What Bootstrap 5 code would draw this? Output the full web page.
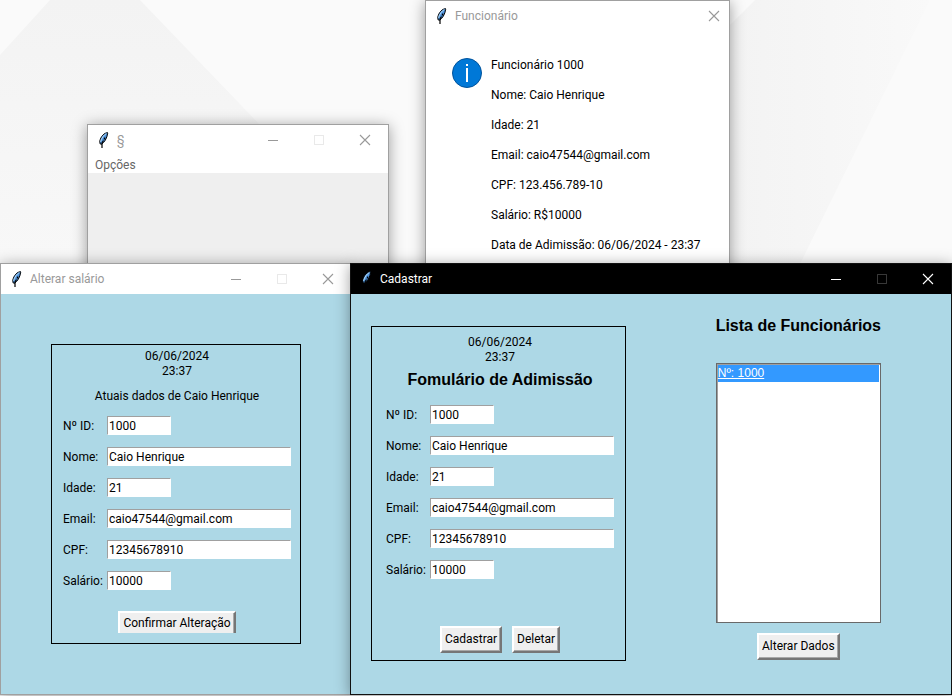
<!DOCTYPE html>
<html lang="pt-BR">
<head>
<meta charset="utf-8">
<meta name="viewport" content="width=device-width, initial-scale=1">
<title>Cadastro de Funcionários</title>
<link href="https://cdn.jsdelivr.net/npm/bootstrap@5.3.0/dist/css/bootstrap.min.css" rel="stylesheet">
<style>
  body { font-family: Roboto, "Open Sans", sans-serif; font-size: 12px; line-height: 15px; color: #000; background: #f8f8f8; }
  .desktop { min-height: 100vh; }
  .wallpaper { width: 100%; height: 100%; }

  /* Windows placed on the desktop */
  .win { background: #fff; border: 1px solid #a0a0a0; box-shadow: 0 2px 14px rgba(0,0,0,.38); }
  .win-options { left: 87px; top: 124px; width: 302px; height: 172px; }
  .win-info { left: 425px; top: 0; width: 305px; height: 300px; }
  .win-salary { left: 0; top: 263px; width: 352px; bottom: 1px; }
  .win-register { left: 350px; top: 263px; right: 0; bottom: 1px; border-color: #111; }
  .win-options .win-body { background: #efefef; }
  .tk-blue { background: #add8e6; }

  .titlebar { height: 30px; padding: 0 13px 0 7px; gap: 6px; color: #999; }
  .win-info .titlebar { padding-right: 5px; }
  .titlebar-active { background: #000; color: #fff; }
  .titlebar-title { font-size: 12px; font-weight: 400; line-height: 15px; }
  .win-ctl { width: 20px; height: 20px; border: 0; background: none; color: inherit; }
  .ctl-row { gap: 26px; }
  .menu-link { color: #666; padding: 3px 7px 0; text-decoration: none; }

  .info-list { gap: 15px; }
  .info-area { padding: 27px 26px; gap: 8px; }

  .form-panel { border: 1px solid #000; }
  .panel-salary { width: 250px; min-height: 300px; margin: 50px 0 0 50px; padding: 4px 9px 10px 11px; }
  .panel-register { width: 255px; min-height: 335px; margin: 32px 0 0 20px; padding: 8px 11px 7px 14px; }
  .tk-heading { font: bold 16px/20px "Liberation Sans", Arial, sans-serif; margin: 0; }
  .panel-sub { margin: 10px 0 12px; }
  .panel-register .tk-heading { margin: 5px 0 15px; }
  .btn-pair { gap: 10px; }

  .field-grid { display: grid; grid-template-columns: 44px 1fr; row-gap: 12px; }
  .field-grid label { padding-top: 2px; line-height: 17px; white-space: nowrap; }
  .tk-input { width: 100%; height: 19px; padding: 0 1px; border: 1px solid #fff; border-top-color: #a0a0a0; border-left-color: #a0a0a0; border-radius: 0; background: #fff; color: #000; outline: 0; }
  .tk-short { width: 64px; }
  .tk-btn { padding: 4px 3px; border: 2px solid; border-color: #fff #767676 #767676 #fff; border-radius: 0; background: #efefef; color: #000; line-height: 15px; box-shadow: inset -1px -1px #a8a8a8; }
  .tk-btn-low { padding: 3px 3px 2px; border-bottom: 0; box-shadow: inset -1px 0 #a8a8a8; }

  .list-side { padding: 22px 70px 35px 0; }
  .tk-list { width: 165px; height: 260px; margin: 27px 0 10px; padding: 0; border: 1px solid #696969; background: #fff; box-shadow: inset 1px 1px #a0a0a0; }
  .tk-row { height: 17px; margin: 1px; padding: 1px 0; background: #3399ff; color: #fff; font: 12px/15px "Liberation Sans", Arial, sans-serif; text-decoration: underline; }
</style>
<script src="https://cdn.jsdelivr.net/npm/bootstrap@5.3.0/dist/js/bootstrap.bundle.min.js"></script>
</head>
<body>
<svg class="d-none" aria-hidden="true">
  <symbol id="feather" viewBox="0 0 16 16">
    <path d="M12.500 .6C9.200 1 6 4.200 4.800 9L5 11.800L6.600 12.200C9.200 10.500 12 6.500 12.700 1.200Z" fill="#4f95e0" stroke="#000" stroke-width="1"/>
    <path d="M11.300 1.500C8.800 3 6.600 6 5.500 9.800" fill="none" stroke="#b9dcf4" stroke-width="1"/>
    <path d="M10 5.500L9 7.500M8.500 8.500L7 11V16" fill="none" stroke="#000" stroke-width="1.200"/>
  </symbol>
  <symbol id="min" viewBox="0 0 20 20"><path d="M5 10.500H15" stroke="currentColor"/></symbol>
  <symbol id="max" viewBox="0 0 20 20"><path d="M5.500 5.500H14.500V14.500H5.500Z" fill="none" stroke="currentColor" opacity=".22"/></symbol>
  <symbol id="close" viewBox="0 0 20 20"><path d="M5 5L15 15M15 5L5 15" stroke="currentColor" stroke-width="1.100"/></symbol>
</svg>

<main class="desktop position-relative overflow-hidden">
  <svg class="wallpaper position-absolute top-0 start-0" viewBox="0 0 952 696" preserveAspectRatio="none" aria-hidden="true">
    <defs>
      <linearGradient id="w1" x1="0" y1="0" x2="0" y2="1"><stop stop-color="#f3f3f3"/><stop offset="1" stop-color="#f8f8f8"/></linearGradient>
      <linearGradient id="w2" x1="0" y1="0" x2="1" y2="0"><stop stop-color="#f3f3f3"/><stop offset="1" stop-color="#f9f9f9"/></linearGradient>
    </defs>
    <path d="M0 0H952V696H0Z" fill="#fafafa"/>
    <path d="M0 55L50 0H140L265 130V260H0Z" fill="url(#w1)"/>
    <path d="M730 25L755 0H930L800 264H730Z" fill="url(#w2)"/>
  </svg>

  <section class="win win-options position-absolute d-flex flex-column" aria-label="§">
    <header class="titlebar d-flex align-items-center flex-shrink-0">
      <svg width="16" height="16"><use href="#feather"/></svg>
      <h2 class="titlebar-title m-0 me-auto">§</h2>
      <div class="ctl-row d-flex">
        <button class="win-ctl p-0 d-flex" aria-label="Minimizar"><svg width="20" height="20"><use href="#min"/></svg></button>
        <button class="win-ctl p-0 d-flex" aria-label="Maximizar" disabled><svg width="20" height="20"><use href="#max"/></svg></button>
        <button class="win-ctl p-0 d-flex" aria-label="Fechar"><svg width="20" height="20"><use href="#close"/></svg></button>
      </div>
    </header>
    <nav class="d-flex"><a class="menu-link" href="#">Opções</a></nav>
    <div class="win-body flex-grow-1"></div>
  </section>

  <section class="win win-info position-absolute" aria-label="Funcionário">
    <header class="titlebar d-flex align-items-center">
      <svg width="16" height="16"><use href="#feather"/></svg>
      <h2 class="titlebar-title m-0 me-auto">Funcionário</h2>
      <button class="win-ctl p-0 d-flex" aria-label="Fechar"><svg width="20" height="20"><use href="#close"/></svg></button>
    </header>
    <div class="info-area d-flex">
      <svg width="31" height="31" viewBox="0 0 31 31" class="flex-shrink-0" aria-hidden="true"><circle cx="15" cy="15" r="14.500" fill="#0078d7" stroke="#00539c"/><path d="M14 6H16V8H14ZM14 10H16V24H14Z" fill="#fff"/></svg>
      <div class="info-list d-flex flex-column text-nowrap">
        <span>Funcionário 1000</span>
        <span>Nome: Caio Henrique</span>
        <span>Idade: 21</span>
        <span>Email: caio47544@gmail.com</span>
        <span>CPF: 123.456.789-10</span>
        <span>Salário: R$10000</span>
        <span>Data de Adimissão: 06/06/2024 - 23:37</span>
      </div>
    </div>
  </section>

  <section class="win win-salary tk-blue position-absolute" aria-label="Alterar salário">
    <header class="titlebar bg-white d-flex align-items-center">
      <svg width="16" height="16"><use href="#feather"/></svg>
      <h2 class="titlebar-title m-0 me-auto">Alterar salário</h2>
      <div class="ctl-row d-flex">
        <button class="win-ctl p-0 d-flex" aria-label="Minimizar"><svg width="20" height="20"><use href="#min"/></svg></button>
        <button class="win-ctl p-0 d-flex" aria-label="Maximizar" disabled><svg width="20" height="20"><use href="#max"/></svg></button>
        <button class="win-ctl p-0 d-flex" aria-label="Fechar"><svg width="20" height="20"><use href="#close"/></svg></button>
      </div>
    </header>
    <form class="form-panel panel-salary d-flex flex-column">
      <div class="text-center">06/06/2024</div>
      <div class="text-center">23:37</div>
      <div class="panel-sub text-center">Atuais dados de Caio Henrique</div>
      <div class="field-grid">
        <label for="s-id">Nº ID:</label><input id="s-id" class="tk-input tk-short" value="1000">
        <label for="s-nome">Nome:</label><input id="s-nome" class="tk-input" value="Caio Henrique">
        <label for="s-idade">Idade:</label><input id="s-idade" class="tk-input tk-short" value="21">
        <label for="s-email">Email:</label><input id="s-email" class="tk-input" value="caio47544@gmail.com">
        <label for="s-cpf">CPF:</label><input id="s-cpf" class="tk-input" value="12345678910">
        <label for="s-sal">Salário:</label><input id="s-sal" class="tk-input tk-short" value="10000">
      </div>
      <div class="d-flex justify-content-center mt-auto"><button type="button" class="tk-btn tk-btn-low">Confirmar Alteração</button></div>
    </form>
  </section>

  <section class="win win-register tk-blue position-absolute d-flex flex-column" aria-label="Cadastrar">
    <header class="titlebar titlebar-active d-flex align-items-center flex-shrink-0">
      <svg width="16" height="16"><use href="#feather"/></svg>
      <h2 class="titlebar-title m-0 me-auto">Cadastrar</h2>
      <div class="ctl-row d-flex">
        <button class="win-ctl p-0 d-flex" aria-label="Minimizar"><svg width="20" height="20"><use href="#min"/></svg></button>
        <button class="win-ctl p-0 d-flex" aria-label="Maximizar" disabled><svg width="20" height="20"><use href="#max"/></svg></button>
        <button class="win-ctl p-0 d-flex" aria-label="Fechar"><svg width="20" height="20"><use href="#close"/></svg></button>
      </div>
    </header>
    <div class="d-flex justify-content-between align-items-start">
      <form class="form-panel panel-register d-flex flex-column">
        <div class="text-center">06/06/2024</div>
        <div class="text-center">23:37</div>
        <h1 class="tk-heading text-center">Fomulário de Adimissão</h1>
        <div class="field-grid">
          <label for="c-id">Nº ID:</label><input id="c-id" class="tk-input tk-short" value="1000">
          <label for="c-nome">Nome:</label><input id="c-nome" class="tk-input" value="Caio Henrique">
          <label for="c-idade">Idade:</label><input id="c-idade" class="tk-input tk-short" value="21">
          <label for="c-email">Email:</label><input id="c-email" class="tk-input" value="caio47544@gmail.com">
          <label for="c-cpf">CPF:</label><input id="c-cpf" class="tk-input" value="12345678910">
          <label for="c-sal">Salário:</label><input id="c-sal" class="tk-input tk-short" value="10000">
        </div>
        <div class="btn-pair d-flex justify-content-center mt-auto">
          <button type="button" class="tk-btn">Cadastrar</button>
          <button type="button" class="tk-btn">Deletar</button>
        </div>
      </form>
      <div class="list-side d-flex flex-column align-items-center">
        <h2 class="tk-heading">Lista de Funcionários</h2>
        <div class="tk-list" role="listbox" aria-label="Lista de Funcionários"><div class="tk-row" role="option" aria-selected="true">Nº: 1000</div></div>
        <button type="button" class="tk-btn">Alterar Dados</button>
      </div>
    </div>
  </section>
</main>
</body>
</html>
